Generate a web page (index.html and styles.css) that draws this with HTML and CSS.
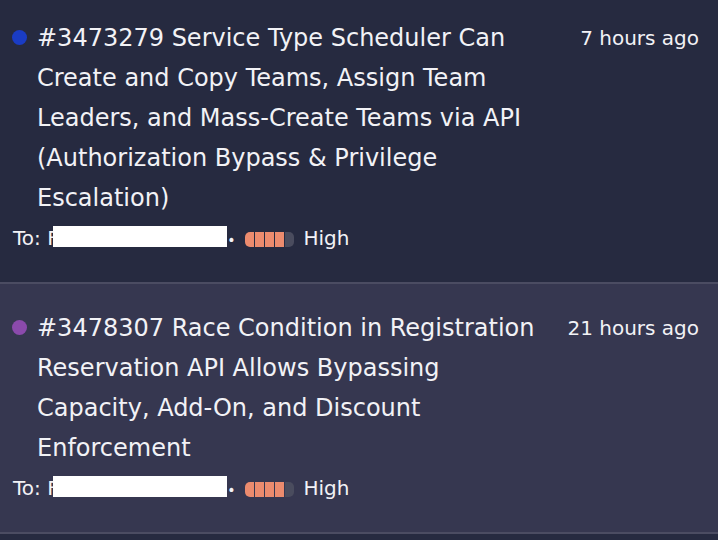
FILE: index.html
```html
<!DOCTYPE html>
<html lang="en">
<head>
  <meta charset="UTF-8" />
  <meta name="viewport" content="width=device-width, initial-scale=1.0" />
  <title>Reports</title>
  <link rel="stylesheet" href="styles.css">
</head>
<body>
  <div class="report-list">
    <!-- Report 1 -->
    <div class="report">
      <div class="report-head">
        <span class="dot dot-blue"></span>
        <div class="title">#3473279 Service Type Scheduler Can Create and Copy Teams, Assign Team Leaders, and Mass-Create Teams via API (Authorization Bypass &amp; Privilege Escalation)</div>
        <div class="time">7 hours ago</div>
      </div>
      <div class="meta">
        To: <span class="redacted-lead">F</span><span class="redacted"></span><span class="sep">&bull;</span><span class="severity"><i class="on"></i><i class="on"></i><i class="on"></i><i class="on"></i><i></i></span>High
      </div>
    </div>

    <!-- Report 2 -->
    <div class="report report-alt">
      <div class="report-head">
        <span class="dot dot-purple"></span>
        <div class="title">#3478307 Race Condition in Registration Reservation API Allows Bypassing Capacity, Add-On, and Discount Enforcement</div>
        <div class="time">21 hours ago</div>
      </div>
      <div class="meta">
        To: <span class="redacted-lead">F</span><span class="redacted"></span><span class="sep">&bull;</span><span class="severity"><i class="on"></i><i class="on"></i><i class="on"></i><i class="on"></i><i></i></span>High
      </div>
    </div>
  </div>
</body>
</html>
```

FILE: styles.css
```css
* {
  box-sizing: border-box;
}
body {
  margin: 0;
  background: #262a40;
  color: #f2f2f6;
  font-family: 'DejaVu Sans', 'Noto Sans', sans-serif;
  overflow: hidden;
}
.report-list {
  margin-top: -6px;
}
.report {
  padding: 24px 19px 24px 12px;
  background: #262a40;
  border-bottom: 2px solid #4b4c62;
}
.report-alt {
  background: #363750;
}
.report-head {
  display: flex;
  align-items: flex-start;
}
.dot {
  flex: none;
  width: 15px;
  height: 15px;
  border-radius: 50%;
  margin-top: 12px;
  margin-right: 10px;
}
.dot-blue {
  background: #1a3cc4;
}
.dot-purple {
  background: #8b4aac;
}
.title {
  flex: 1;
  max-width: 505px;
  font-size: 24px;
  line-height: 40px;
}
.time {
  margin-left: auto;
  font-size: 20px;
  line-height: 40px;
  white-space: nowrap;
}
.meta {
  font-size: 20px;
  line-height: 40px;
  height: 40px;
  white-space: nowrap;
  padding-left: 1px;
}
.redacted-lead {
  display: inline-block;
  width: 6px;
  overflow: hidden;
  vertical-align: top;
}
.redacted {
  display: inline-block;
  width: 174px;
  height: 21px;
  background: #fff;
  vertical-align: -2px;
}
.sep {
  margin: 0 10px 0 0;
  font-size: 14px;
}
.severity {
  display: inline-flex;
  gap: 1px;
  margin-right: 9px;
  vertical-align: middle;
}
.severity i {
  width: 9px;
  height: 15px;
  background: #4a4c5e;
}
.severity i.on {
  background: #ec8b6e;
}
.severity i:first-child {
  border-radius: 5px 0 0 5px;
}
.severity i:last-child {
  border-radius: 0 5px 5px 0;
}
```
